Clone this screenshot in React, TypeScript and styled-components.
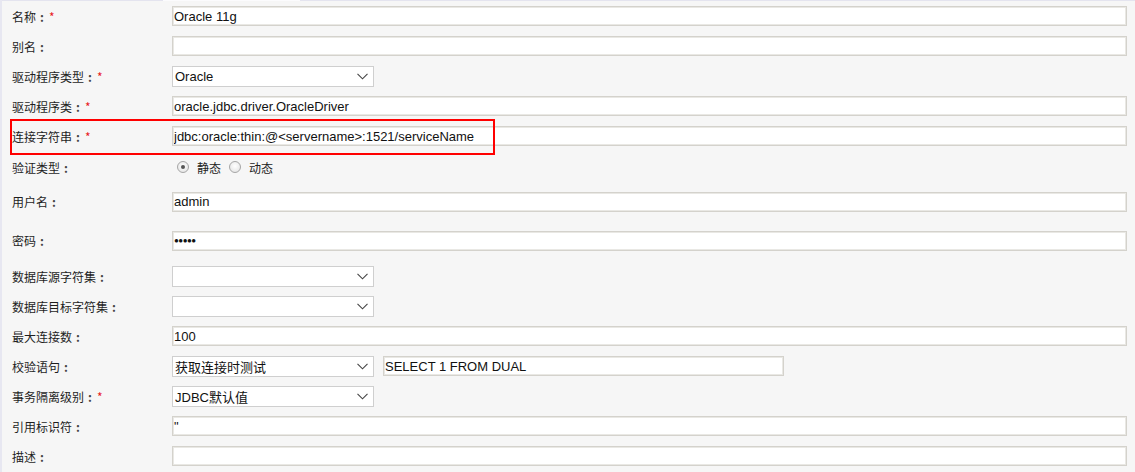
import styled, { createGlobalStyle } from "styled-components";

const GlobalStyle = createGlobalStyle`
  html, body {
    margin: 0;
    padding: 0;
    background: #f6f6f6;
  }
`

const Page = styled.div`
  width: 1135px;
  height: 472px;
  box-sizing: border-box;
  border-left: 2px solid #e7e7f1;
  background: #f6f6f6;
  font-family: "Liberation Sans", "Noto Sans CJK SC", sans-serif;
  overflow: hidden;
`

const TopLine = styled.div`
  display: flex;
  height: 1px;
`

const TopSeg = styled.div<{ $w?: number; $light?: boolean }>`
  flex: ${p => (p.$w ? `0 0 ${p.$w}px` : '1')};
  background: ${p => (p.$light ? '#fbfbfd' : '#e4e4ef')};
`

const Form = styled.div`
  padding: 0 8px 0 10px;
`

const Row = styled.div<{ $h: number }>`
  position: relative;
  display: grid;
  grid-template-columns: 160px 1fr;
  align-items: center;
  height: ${p => p.$h}px;
`

const Label = styled.div`
  display: flex;
  align-items: center;
  font-family: "Noto Sans CJK SC", "Liberation Sans", sans-serif;
  font-size: 12px;
  color: #1e1e1e;
  line-height: 14px;
  padding-top: 1px;
`

const Colon = styled.span`
  display: inline-block;
  width: 12px;
  text-align: center;
  font-weight: bold;
  color: #444;
`

const Star = styled.span`
  color: #e8211f;
  margin-left: 1px;
`

const Field = styled.div`
  display: flex;
  align-items: center;
  gap: 9px;
`

const TextBox = styled.input<{ $w?: number }>`
  box-sizing: border-box;
  width: ${p => (p.$w ? `${p.$w}px` : '100%')};
  height: 20px;
  margin: 0;
  padding: 0 1px;
  border: 1px solid #d4d2cc;
  box-shadow: inset 0 0 0 1px #e9e8e4;
  background: #fff;
  font-family: "Liberation Sans", "Noto Sans CJK SC", sans-serif;
  font-size: 13px;
  color: #111;
  outline: none;
`

const Dots = styled(TextBox)`
  font-size: 8px;
  letter-spacing: -0.5px;
`

const SelectBox = styled.div`
  box-sizing: border-box;
  width: 202px;
  height: 21px;
  display: flex;
  align-items: center;
  justify-content: space-between;
  padding: 0 5px 0 2px;
  border: 1px solid #cfcfcf;
  background: #fff;
  font-family: "Liberation Sans", "Noto Sans CJK SC", sans-serif;
  font-size: 13px;
  color: #111;
`

const Radios = styled.div`
  display: flex;
  align-items: center;
  padding-left: 5px;
  font-family: "Noto Sans CJK SC", sans-serif;
  font-size: 12px;
  color: #222;
`

const RadioDot = styled.span<{ $on?: boolean }>`
  box-sizing: border-box;
  width: 12px;
  height: 12px;
  border-radius: 50%;
  border: 1px solid #a6a6a6;
  background: radial-gradient(circle at 50% 40%, #ffffff 0%, #e0e0e0 100%);
  display: flex;
  align-items: center;
  justify-content: center;
  margin-right: 8px;
  &::after {
    content: "";
    width: 4px;
    height: 4px;
    border-radius: 50%;
    background: ${p => (p.$on ? '#555' : 'transparent')};
  }
`

const RadioText = styled.span`
  margin-right: 8px;
`

const Highlight = styled.div`
  position: absolute;
  left: -2px;
  top: -2px;
  width: 485px;
  height: 36px;
  box-sizing: border-box;
  border: 2px solid #f00;
  pointer-events: none;
`

const Chevron = () => (
  <svg width="11" height="7" viewBox="0 0 11 7">
    <path d="M0.5 0.8 L5.5 5.8 L10.5 0.8" fill="none" stroke="#444" strokeWidth="1.1" />
  </svg>
)

const Select = ({ value }: { value?: string }) => (
  <SelectBox>
    <span>{value}</span>
    <Chevron />
  </SelectBox>
)

const Name = ({ text, req }: { text: string; req?: boolean }) => (
  <Label>
    {text}
    <Colon>:</Colon>
    {req && <Star>*</Star>}
  </Label>
)

const App = () => {
  return (
    <Page>
      <GlobalStyle />
      <TopLine>
        <TopSeg $w={161} />
        <TopSeg $w={137} $light />
        <TopSeg />
      </TopLine>
      <Form>
        <Row $h={30}>
          <Name text="名称" req />
          <Field><TextBox readOnly defaultValue="Oracle 11g" /></Field>
        </Row>
        <Row $h={30}>
          <Name text="别名" />
          <Field><TextBox readOnly defaultValue="" /></Field>
        </Row>
        <Row $h={30}>
          <Name text="驱动程序类型" req />
          <Field><Select value="Oracle" /></Field>
        </Row>
        <Row $h={30}>
          <Name text="驱动程序类" req />
          <Field><TextBox readOnly defaultValue="oracle.jdbc.driver.OracleDriver" /></Field>
        </Row>
        <Row $h={30}>
          <Name text="连接字符串" req />
          <Field><TextBox readOnly defaultValue="jdbc:oracle:thin:@<servername>:1521/serviceName" /></Field>
          <Highlight />
        </Row>
        <Row $h={32}>
          <Name text="验证类型" />
          <Radios>
            <RadioDot $on />
            <RadioText>静态</RadioText>
            <RadioDot />
            <RadioText>动态</RadioText>
          </Radios>
        </Row>
        <Row $h={37}>
          <Name text="用户名" />
          <Field><TextBox readOnly defaultValue="admin" /></Field>
        </Row>
        <Row $h={41}>
          <Name text="密码" />
          <Field><Dots readOnly defaultValue="●●●●●" /></Field>
        </Row>
        <Row $h={30}>
          <Name text="数据库源字符集" />
          <Field><Select /></Field>
        </Row>
        <Row $h={30}>
          <Name text="数据库目标字符集" />
          <Field><Select /></Field>
        </Row>
        <Row $h={30}>
          <Name text="最大连接数" />
          <Field><TextBox readOnly defaultValue="100" /></Field>
        </Row>
        <Row $h={30}>
          <Name text="校验语句" />
          <Field>
            <Select value="获取连接时测试" />
            <TextBox $w={401} readOnly defaultValue="SELECT 1 FROM DUAL" />
          </Field>
        </Row>
        <Row $h={30}>
          <Name text="事务隔离级别" req />
          <Field><Select value="JDBC默认值" /></Field>
        </Row>
        <Row $h={30}>
          <Name text="引用标识符" />
          <Field><TextBox readOnly defaultValue={'"'} /></Field>
        </Row>
        <Row $h={30}>
          <Name text="描述" />
          <Field><TextBox readOnly defaultValue="" /></Field>
        </Row>
      </Form>
    </Page>
  )
}

export default App
